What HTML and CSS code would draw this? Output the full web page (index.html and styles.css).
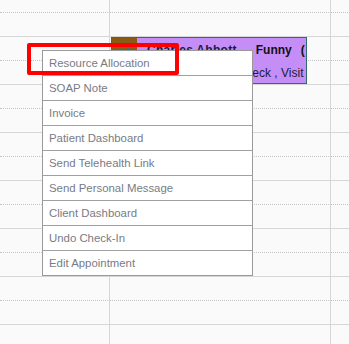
FILE: index.html
```html
<!DOCTYPE html>
<html lang="en">
<head>
    <meta charset="UTF-8">
    <meta name="viewport" content="width=device-width, initial-scale=1.0">
    <title>Scheduler</title>
    <link rel="stylesheet" href="styles.css">
</head>
<body>
    <div class="scheduler">
        <!-- Time slots -->
        <div class="slot half top"><div class="cell time"></div><div class="cell"></div><div class="cell"></div></div>
        <div class="slot hour"><div class="cell time"></div><div class="cell"></div><div class="cell"></div></div>
        <div class="slot half"><div class="cell time"></div><div class="cell"></div><div class="cell"></div></div>
        <div class="slot hour"><div class="cell time"></div><div class="cell"></div><div class="cell"></div></div>
        <div class="slot half"><div class="cell time"></div><div class="cell"></div><div class="cell"></div></div>
        <div class="slot hour"><div class="cell time"></div><div class="cell"></div><div class="cell"></div></div>
        <div class="slot half"><div class="cell time"></div><div class="cell"></div><div class="cell"></div></div>
        <div class="slot hour"><div class="cell time"></div><div class="cell"></div><div class="cell"></div></div>
        <div class="slot half"><div class="cell time"></div><div class="cell"></div><div class="cell"></div></div>
        <div class="slot hour"><div class="cell time"></div><div class="cell"></div><div class="cell"></div></div>
        <div class="slot half"><div class="cell time"></div><div class="cell"></div><div class="cell"></div></div>
        <div class="slot hour"><div class="cell time"></div><div class="cell"></div><div class="cell"></div></div>
        <div class="slot half"><div class="cell time"></div><div class="cell"></div><div class="cell"></div></div>
        <div class="slot hour"><div class="cell time"></div><div class="cell"></div><div class="cell"></div></div>
        <div class="slot half"><div class="cell time"></div><div class="cell"></div><div class="cell"></div></div>

        <!-- Appointment -->
        <div class="appointment">
            <div class="appt-status">
                <svg width="10" height="8" viewBox="0 0 10 8"><path d="M1 7 L5 1 L9 7" fill="none" stroke="#2f7f7a" stroke-width="1.5"/></svg>
            </div>
            <div class="appt-body">
                <div class="appt-title"><span class="appt-name">Charles Abbott</span><span class="appt-tag">Funny</span><span>(</span></div>
                <div class="appt-sub">Check , Visit</div>
            </div>
        </div>

        <!-- Context menu -->
        <ul class="context-menu">
            <li>Resource Allocation</li>
            <li>SOAP Note</li>
            <li>Invoice</li>
            <li>Patient Dashboard</li>
            <li>Send Telehealth Link</li>
            <li>Send Personal Message</li>
            <li>Client Dashboard</li>
            <li>Undo Check-In</li>
            <li>Edit Appointment</li>
        </ul>

        <div class="highlight"></div>
    </div>
</body>
</html>
```

FILE: styles.css
```css
body {
    margin: 0;
    padding: 0;
    background-color: #fafafa;
    font-family: "Liberation Sans", Arial, sans-serif;
    overflow: hidden;
}

.scheduler {
    position: relative;
    width: 350px;
    height: 344px;
}

/* Grid rows */
.slot {
    display: grid;
    grid-template-columns: 110px 221px 1fr;
    height: 24px;
}

.slot.top {
    height: 13px;
}

.cell {
    box-sizing: border-box;
    border-right: 1px solid #d6d6d6;
}

.slot.half .cell {
    border-bottom: 1px dotted #c4c4c4;
}

.slot.hour .cell {
    border-bottom: 1px solid #d6d6d6;
}

/* Appointment block */
.appointment {
    position: absolute;
    left: 111px;
    top: 37px;
    width: 196px;
    height: 47px;
    box-sizing: border-box;
    border: 1px solid #2d6f70;
    display: flex;
    overflow: hidden;
}

.appt-status {
    width: 25px;
    flex: none;
    background-color: #8c5a10;
    display: flex;
    justify-content: center;
    padding-top: 4px;
    box-sizing: border-box;
}

.appt-body {
    flex: 1;
    background-color: #c58ef7;
    white-space: nowrap;
    overflow: hidden;
    font-size: 12px;
}

.appt-title {
    font-weight: bold;
    color: #111;
    padding: 5px 0 0 10px;
    line-height: 14px;
}

.appt-name {
    color: #1c1c3c;
    letter-spacing: 0.3px;
}

.appt-tag {
    margin: 0 9px 0 19px;
}

.appt-sub {
    color: #1c1c3c;
    padding: 9px 0 0 100px;
    line-height: 14px;
}

/* Context menu */
.context-menu {
    position: absolute;
    left: 42px;
    top: 50px;
    width: 211px;
    box-sizing: border-box;
    margin: 0;
    padding: 0;
    list-style: none;
    background-color: #fff;
    border: 1px solid #9a9a9a;
}

.context-menu li {
    height: 23px;
    padding: 1px 0 0 6px;
    line-height: 23px;
    font-size: 11.4px;
    color: #787b84;
    border-bottom: 1px solid #a0a0a0;
}

.context-menu li:last-child {
    border-bottom: none;
}

/* Red annotation box */
.highlight {
    position: absolute;
    left: 27px;
    top: 43px;
    width: 152px;
    height: 32px;
    box-sizing: border-box;
    border: 4px solid #ff0000;
    border-radius: 2px;
}
```
